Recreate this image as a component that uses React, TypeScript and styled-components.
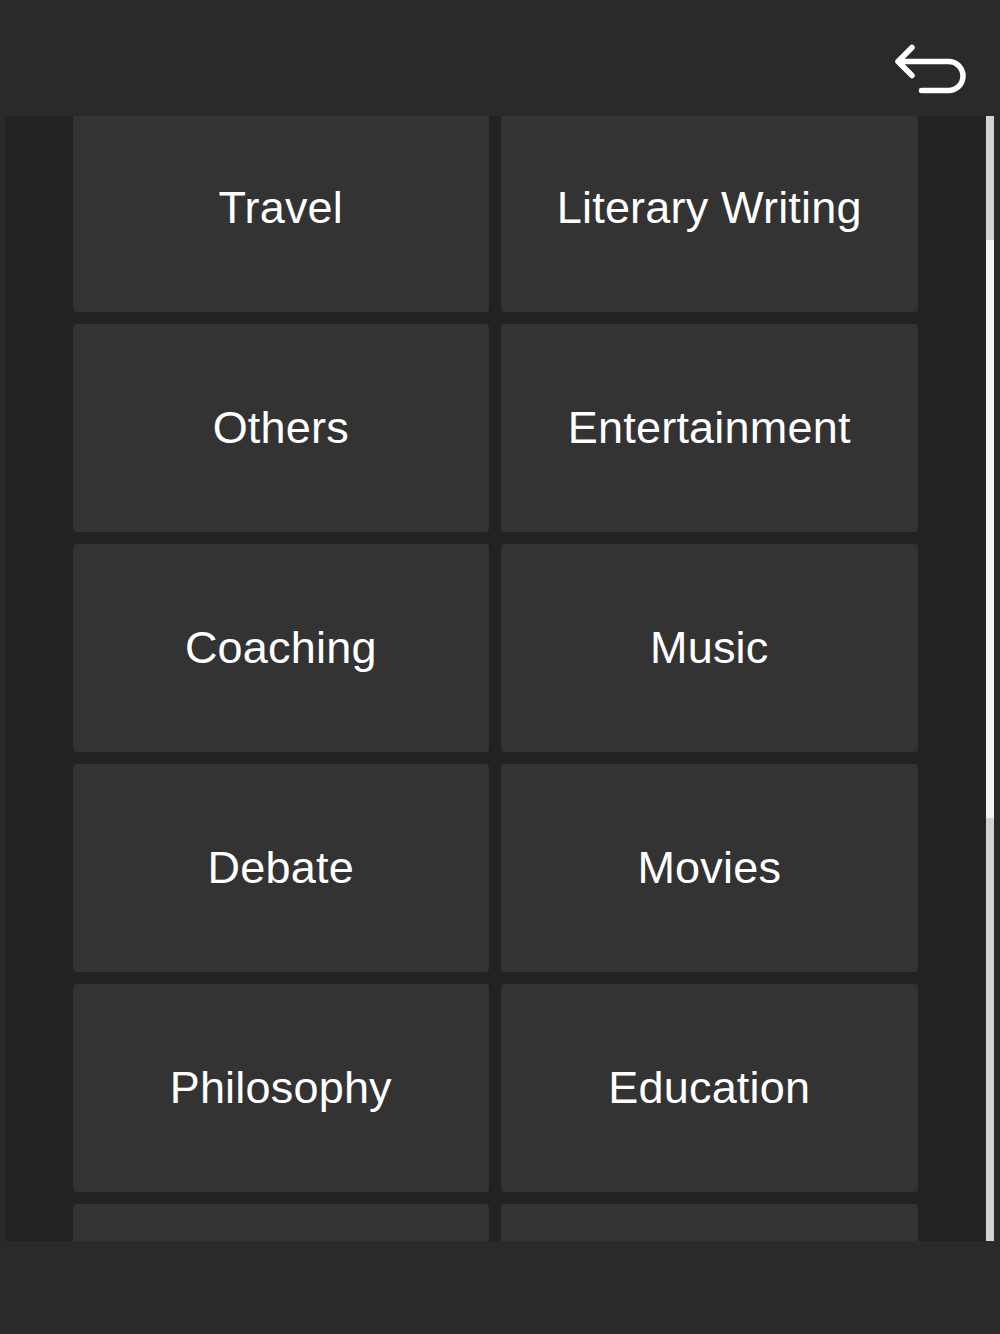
import * as React from 'react';
import styled, { createGlobalStyle } from 'styled-components';

const GlobalStyle = createGlobalStyle`
  html, body {
    margin: 0;
    padding: 0;
    background: #2a2a2a;
    font-family: "Liberation Sans", Arial, sans-serif;
  }
`;

const Page = styled.div`
  width: 1000px;
  height: 1334px;
  background: #2a2a2a;
  display: flex;
  flex-direction: column;
`;

const Header = styled.header`
  height: 116px;
  box-sizing: border-box;
  display: flex;
  justify-content: flex-end;
  align-items: flex-start;
  padding: 32px 32px 0 0;
`;

const BackButton = styled.button`
  background: none;
  border: 0;
  padding: 0;
  width: 80px;
  height: 64px;
  color: #fff;
  cursor: pointer;
`;

const Body = styled.div`
  margin: 0 6px 0 5px;
  height: 1125px;
  display: flex;
  gap: 1px;
`;

const ScrollArea = styled.div`
  flex: 1;
  background: #222222;
  overflow-y: scroll;
  scrollbar-width: none;

  &::-webkit-scrollbar {
    display: none;
  }
`;

const Track = styled.div<{ $offset: number }>`
  width: 8px;
  background: #d3d3d3;
  padding-top: ${(p) => p.$offset}px;
  box-sizing: border-box;
`;

const Thumb = styled.div<{ $size: number }>`
  height: ${(p) => p.$size}px;
  background: #f2f2f2;
`;

const Grid = styled.div`
  width: 845px;
  margin: 0 auto;
  padding: 9px 0 3px;
  display: grid;
  grid-template-columns: 1fr 1fr;
  grid-auto-rows: 208px;
  gap: 12px;
`;

const Tile = styled.div`
  background: #333333;
  border-radius: 4px;
  display: flex;
  align-items: center;
  justify-content: center;
  color: #ffffff;
  font-size: 45px;
  letter-spacing: 0.2px;
`;

const topics = [
  'Sports', 'Technology',
  'Travel', 'Literary Writing',
  'Others', 'Entertainment',
  'Coaching', 'Music',
  'Debate', 'Movies',
  'Philosophy', 'Education',
  'Science', 'Politics',
  'Health', 'Business',
  'Art', 'History',
  'Food', 'Fashion',
];

const UndoIcon = () => (
  <svg width="80" height="64" viewBox="0 0 80 64" fill="none">
    <path
      d="M24 15.5 L10 29.5 L24 43.5 M10 29.5 H60.5 A14.5 14.5 0 0 1 60.5 58.5 H33.5"
      stroke="currentColor"
      strokeWidth="5.5"
      strokeLinecap="round"
      strokeLinejoin="round"
    />
  </svg>
);

const App = () => {
  const scrollRef = React.useRef<HTMLDivElement>(null);

  React.useLayoutEffect(() => {
    if (scrollRef.current) scrollRef.current.scrollTop = 241;
  }, []);

  return (
    <Page>
      <GlobalStyle />
      <Header>
        <BackButton aria-label="Back">
          <UndoIcon />
        </BackButton>
      </Header>
      <Body>
        <ScrollArea ref={scrollRef}>
          <Grid>
            {topics.map((t) => (
              <Tile key={t}>{t}</Tile>
            ))}
          </Grid>
        </ScrollArea>
        <Track $offset={124}>
          <Thumb $size={578} />
        </Track>
      </Body>
    </Page>
  );
};

export default App;
